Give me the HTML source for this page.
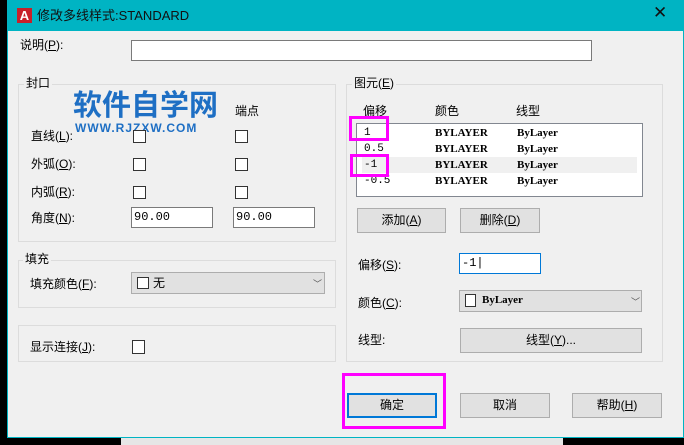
<!DOCTYPE html><html><head><meta charset="utf-8"><style>
*{margin:0;padding:0;box-sizing:border-box}
body{width:684px;height:445px;background:#000;position:relative;overflow:hidden;font-family:"Liberation Sans","Noto Sans CJK SC",sans-serif;font-size:12px;color:#000}
.a{position:absolute}
.t{position:absolute;white-space:nowrap;line-height:14px}
.grp{position:absolute;border:1px solid #dcdcdc}
.cb{position:absolute;width:13px;height:13px;border:1px solid #333;background:#fff}
.in{position:absolute;background:#fff;border:1px solid #7a7a7a;font-family:"Liberation Mono","Noto Sans CJK SC",monospace;font-size:12px;padding:1px 2px;line-height:17px}
.btn{position:absolute;background:#e1e1e1;border:1px solid #adadad;text-align:center;line-height:23px}
.mono{font-family:"Liberation Serif","Noto Sans CJK SC",serif;font-size:11px;font-weight:bold}
.mg{position:absolute;border:3px solid #f0f}
</style></head><body>
<div class="a" style="left:7px;top:0;width:677px;height:438px;background:#00b4c3"></div>
<div class="a" style="left:8px;top:31px;width:675px;height:406px;background:#f0f0f0"></div>
<div class="a" style="left:121px;top:438px;width:442px;height:7px;background:#e6e6e6"></div>
<div class="a" style="left:17px;top:8px;width:15px;height:15px;background:#c8202a;color:#fff;font-weight:bold;font-size:13px;text-align:center;line-height:15px">A</div>
<div class="t" style="left:37px;top:9px;font-size:13px;color:#111">修改多线样式:STANDARD</div>
<div class="t" style="left:653px;top:6px;font-size:17px;color:#111">✕</div>
<div class="t" style="left:20px;top:38px">说明(<u>P</u>):</div>
<div class="in" style="left:131px;top:40px;width:461px;height:21px"></div>
<div class="grp" style="left:18px;top:84px;width:318px;height:158px"></div>
<div class="t" style="left:24px;top:76px;background:#f0f0f0;padding:0 2px">封口</div>
<div class="t" style="left:73px;top:90px;font-size:29px;line-height:32px;font-weight:bold;color:#1e6fc4">软件自学网</div>
<div class="t" style="left:75px;top:121px;font-size:12px;font-weight:bold;color:#1e6fc4;letter-spacing:1px">WWW.RJZXW.COM</div>
<div class="t" style="left:235px;top:104px">端点</div>
<div class="t" style="left:31px;top:129px">直线(<u>L</u>):</div>
<div class="t" style="left:31px;top:157px">外弧(<u>O</u>):</div>
<div class="t" style="left:31px;top:185px">内弧(<u>R</u>):</div>
<div class="t" style="left:31px;top:211px">角度(<u>N</u>):</div>
<div class="cb" style="left:133px;top:130px"></div><div class="cb" style="left:235px;top:130px"></div>
<div class="cb" style="left:133px;top:158px"></div><div class="cb" style="left:235px;top:158px"></div>
<div class="cb" style="left:133px;top:186px"></div><div class="cb" style="left:235px;top:186px"></div>
<div class="in" style="left:131px;top:207px;width:82px;height:21px">90.00</div>
<div class="in" style="left:233px;top:207px;width:82px;height:21px">90.00</div>
<div class="grp" style="left:18px;top:260px;width:318px;height:48px"></div>
<div class="t" style="left:23px;top:252px;background:#f0f0f0;padding:0 2px">填充</div>
<div class="t" style="left:30px;top:277px">填充颜色(<u>F</u>):</div>
<div class="a" style="left:131px;top:272px;width:194px;height:22px;background:#e1e1e1;border:1px solid #adadad"></div>
<div class="cb" style="left:137px;top:277px;width:12px;height:12px"></div>
<div class="t" style="left:153px;top:276px">无</div>
<div class="t" style="left:313px;top:277px;font-size:9px;color:#555">﹀</div>
<div class="grp" style="left:18px;top:325px;width:318px;height:37px"></div>
<div class="t" style="left:30px;top:340px">显示连接(<u>J</u>):</div>
<div class="cb" style="left:132px;top:340px;width:13px;height:14px"></div>
<div class="grp" style="left:346px;top:84px;width:317px;height:278px"></div>
<div class="t" style="left:352px;top:76px;background:#f0f0f0;padding:0 2px">图元(<u>E</u>)</div>
<div class="t" style="left:363px;top:104px">偏移</div>
<div class="t" style="left:435px;top:104px">颜色</div>
<div class="t" style="left:516px;top:104px">线型</div>
<div class="a" style="left:356px;top:123px;width:287px;height:74px;background:#fff;border:1px solid #828790"></div>
<div class="a" style="left:362px;top:157px;width:275px;height:16px;background:#f0f0f0"></div>
<div class="t mono" style="left:364px;top:126px;font-weight:normal;font-family:'Liberation Mono',monospace">1</div>
<div class="t mono" style="left:364px;top:142px;font-weight:normal;font-family:'Liberation Mono',monospace">0.5</div>
<div class="t mono" style="left:364px;top:158px;font-weight:normal;font-family:'Liberation Mono',monospace">-1</div>
<div class="t mono" style="left:364px;top:174px;font-weight:normal;font-family:'Liberation Mono',monospace">-0.5</div>
<div class="t mono" style="left:435px;top:126px">BYLAYER</div><div class="t mono" style="left:517px;top:126px">ByLayer</div>
<div class="t mono" style="left:435px;top:142px">BYLAYER</div><div class="t mono" style="left:517px;top:142px">ByLayer</div>
<div class="t mono" style="left:435px;top:158px">BYLAYER</div><div class="t mono" style="left:517px;top:158px">ByLayer</div>
<div class="t mono" style="left:435px;top:174px">BYLAYER</div><div class="t mono" style="left:517px;top:174px">ByLayer</div>
<div class="mg" style="left:349px;top:116px;width:40px;height:25px"></div>
<div class="mg" style="left:350px;top:154px;width:39px;height:23px"></div>
<div class="btn" style="left:357px;top:208px;width:89px;height:25px">添加(<u>A</u>)</div>
<div class="btn" style="left:460px;top:208px;width:80px;height:25px">删除(<u>D</u>)</div>
<div class="t" style="left:358px;top:258px">偏移(<u>S</u>):</div>
<div class="in" style="left:459px;top:253px;width:82px;height:21px;border-color:#0078d7">-1|</div>
<div class="t" style="left:358px;top:296px">颜色(<u>C</u>):</div>
<div class="a" style="left:459px;top:290px;width:183px;height:22px;background:#e1e1e1;border:1px solid #adadad"></div>
<div class="cb" style="left:465px;top:294px;width:11px;height:13px"></div>
<div class="t mono" style="left:482px;top:293px">ByLayer</div>
<div class="t" style="left:631px;top:295px;font-size:9px;color:#555">﹀</div>
<div class="t" style="left:358px;top:333px">线型:</div>
<div class="btn" style="left:460px;top:328px;width:182px;height:25px">线型(<u>Y</u>)...</div>
<div class="mg" style="left:342px;top:373px;width:104px;height:56px"></div>
<div class="btn" style="left:347px;top:393px;width:90px;height:25px;border:2px solid #0078d7;line-height:21px">确定</div>
<div class="btn" style="left:460px;top:393px;width:90px;height:25px">取消</div>
<div class="btn" style="left:572px;top:393px;width:90px;height:25px">帮助(<u>H</u>)</div>
</body></html>
